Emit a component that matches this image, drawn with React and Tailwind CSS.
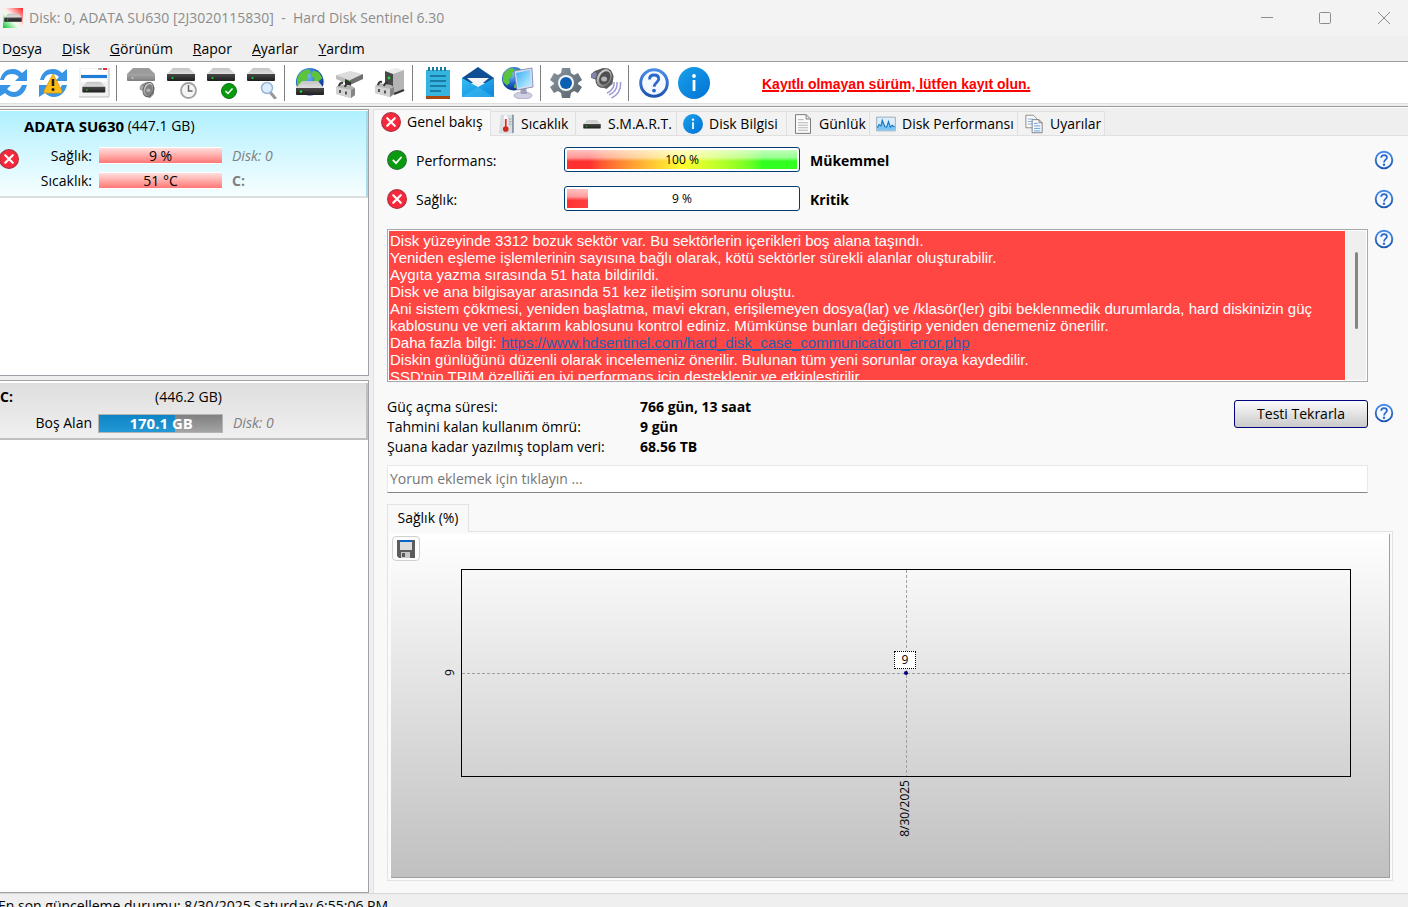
import { useState } from "react";

// shared gradients, referenced by id from every icon
function Gradients() {
  return (
    <svg width="0" height="0" className="absolute" aria-hidden="true">
      <defs>
        <linearGradient id="driveTop" x1="0" y1="0" x2="0" y2="1">
          <stop offset="0" stopColor="#c4c4c4" />
          <stop offset="1" stopColor="#dedede" />
        </linearGradient>
        <linearGradient id="driveFront" x1="0" y1="0" x2="0" y2="1">
          <stop offset="0" stopColor="#4a4a4a" />
          <stop offset="1" stopColor="#1e1e1e" />
        </linearGradient>
        <linearGradient id="driveOff" x1="0" y1="0" x2="0" y2="1">
          <stop offset="0" stopColor="#a8a8a8" />
          <stop offset="1" stopColor="#7d7d7d" />
        </linearGradient>
        <linearGradient id="metal" x1="0" y1="0" x2="1" y2="1">
          <stop offset="0" stopColor="#e8e8e8" />
          <stop offset="1" stopColor="#6a6a6a" />
        </linearGradient>
        <linearGradient id="infoBlue" x1="0" y1="0" x2="1" y2="1">
          <stop offset="0" stopColor="#1ba1e8" />
          <stop offset="1" stopColor="#0072d6" />
        </linearGradient>
        <linearGradient id="helpRing" x1="0" y1="0" x2="0" y2="1">
          <stop offset="0" stopColor="#4a8be8" />
          <stop offset="1" stopColor="#1f57b0" />
        </linearGradient>
        <linearGradient id="envelope" x1="0" y1="0" x2="1" y2="1">
          <stop offset="0" stopColor="#35bff2" />
          <stop offset="1" stopColor="#0a84dc" />
        </linearGradient>
        <linearGradient id="gearGray" x1="0" y1="0" x2="1" y2="1">
          <stop offset="0" stopColor="#8b98a2" />
          <stop offset="1" stopColor="#56616b" />
        </linearGradient>
        <linearGradient id="appBg" x1="1" y1="0" x2="0" y2="1">
          <stop offset="0" stopColor="#ff2020" />
          <stop offset="0.45" stopColor="#ffe8e8" />
          <stop offset="0.6" stopColor="#e8ffe8" />
          <stop offset="1" stopColor="#10c030" />
        </linearGradient>
        <linearGradient id="screen" x1="0" y1="0" x2="1" y2="1">
          <stop offset="0" stopColor="#3aaef8" />
          <stop offset="1" stopColor="#c8f4ff" />
        </linearGradient>
        <radialGradient id="ocean" cx="0.4" cy="0.3" r="0.7">
          <stop offset="0" stopColor="#7cc4ff" />
          <stop offset="0.6" stopColor="#1d5fc8" />
          <stop offset="1" stopColor="#0b2f80" />
        </radialGradient>
      </defs>
    </svg>
  );
}

function Icon({ size = 32, className = "", children }) {
  return (
    <svg width={size} height={size} viewBox="0 0 32 32" className={`shrink-0 ${className}`} fill="none" aria-hidden="true">
      {children}
    </svg>
  );
}

function Drive({ transform, off }) {
  return (
    <g transform={transform}>
      <path d="M7 1h16l6 6H1z" fill={off ? "#9b9b9b" : "url(#driveTop)"} />
      <path d="M1 7h28v6q0 1-1 1H2q-1 0-1-1z" fill={off ? "url(#driveOff)" : "url(#driveFront)"} />
      <circle cx="6.5" cy="11" r="1" fill={off ? "#c8c8c8" : "#19e02c"} />
    </g>
  );
}

function Globe({ transform }) {
  return (
    <g transform={transform}>
      <circle cx="12" cy="12" r="12" fill="url(#ocean)" />
      <path d="M3 5q4-4 8-4l2 3-3 2 1 3-4 3 1 4-3 3-4-4q-1-6 2-10zM15 2l5 2 3 5-3 2-2 5-3-2 1-5-3-2zM13 17l4 1-2 4-3-1z" fill="#5cc43c" />
    </g>
  );
}

function Arrows() {
  return (
    <g fill="#3894e4">
      <path d="M2 13C4 5 9 2 15 2c4 0 7 2 9 4l5-4v12H17l4-4c-2-2-4-3-7-3-4 0-7 2-8 6z" />
      <path d="M29 18c-2 8-7 12-13 12-4 0-7-2-9-4l-6 4V18h12l-4 4c2 2 4 3 7 3 4 0 6-3 8-7z" />
    </g>
  );
}

function HelpIcon({ size = 20 }) {
  return (
    <Icon size={size}>
      <circle cx="16" cy="16" r="13.3" stroke="url(#helpRing)" strokeWidth="3" fill="#f4f9ff" />
      <path d="M11.5 12.5q0-4.5 4.6-4.5t4.6 4c0 3.4-4.6 3.6-4.6 7.8" stroke="#2b68c8" strokeWidth="2.8" />
      <circle cx="16" cy="23.6" r="1.9" fill="#2b68c8" />
    </Icon>
  );
}

function InfoIcon({ size = 20 }) {
  return (
    <Icon size={size}>
      <circle cx="16" cy="16" r="16" fill="url(#infoBlue)" />
      <path d="M16 13v11" stroke="#fff" strokeWidth="2.8" />
      <circle cx="16" cy="9" r="1.9" fill="#fff" />
    </Icon>
  );
}

function ErrorIcon({ className }) {
  return (
    <Icon size={20} className={className}>
      <circle cx="16" cy="16" r="15" fill="#f8283c" stroke="#b03040" strokeWidth="2" />
      <path d="M10 10l12 12M22 10L10 22" stroke="#fff" strokeWidth="3.4" strokeLinecap="round" />
    </Icon>
  );
}

function OkIcon() {
  return (
    <Icon size={20}>
      <circle cx="16" cy="16" r="15" fill="#0a9a10" stroke="#2a7430" strokeWidth="2" />
      <path d="M10 16.500l4.500 4.500 8-9" stroke="#fff" strokeWidth="2.8" strokeLinecap="round" />
    </Icon>
  );
}

function Speaker({ transform, gray }) {
  return (
    <g transform={transform}>
      <path d="M1 7l3-3 7-3 6 2 3 6-1 8-5 5-6-3-2-6-5-2z" fill={gray ? "#8a8a8a" : "#5c5c64"} />
      <path d="M1 7l4-2 2 7-5-1z" fill={gray ? "#a8a8a8" : "#8484b0"} />
      <ellipse cx="12" cy="11" rx="6.500" ry="9.500" transform="rotate(20 12 11)" fill="url(#metal)" stroke="#555" />
      <ellipse cx="12.500" cy="11" rx="4.500" ry="7" transform="rotate(20 12.500 11)" fill={gray ? "#808080" : "#505054"} />
      <circle cx="12" cy="12" r="2.500" fill="#b4b4b4" />
    </g>
  );
}

function Connector({ transform }) {
  return (
    <g transform={transform}>
      <path d="M0 5l4-3 12 2 3 2v7l-4 3L0 12z" fill="#b4b4b4" />
      <path d="M0 5l15 3v8L0 12z" fill="#d2d2d2" />
      <path d="M15 8l4-2v7l-4 3z" fill="#858585" />
      <path d="M3 4q1-4 4-3M9 5q1-4 4-3" stroke="#333" strokeWidth="2" />
      <path d="M4 8v3M10 9.500v3" stroke="#555" strokeWidth="2" />
    </g>
  );
}

const toolbar = [
  [
    { label: "Yenile", icon: <Icon><Arrows /></Icon> },
    {
      label: "Zorla yenile",
      icon: (
        <Icon>
          <Arrows />
          <path d="M15 7l9 17q.500 2-1.500 2h-15q-2 0-1.500-2z" fill="#fdbb16" stroke="#e09a08" strokeWidth="0.8" />
          <path d="M15 12v7" stroke="#222" strokeWidth="2.6" />
          <circle cx="15" cy="22.500" r="1.500" fill="#222" />
        </Icon>
      ),
    },
    {
      label: "Pencere",
      icon: (
        <Icon>
          <path d="M1 1h30v29H1z" fill="#f1f1f1" />
          <path d="M1 30h30v-29" stroke="#bdbdbd" />
          <path d="M3 2h26v5H3z" fill="#fff" />
          <path d="M20 2h4" stroke="#aaa" strokeWidth="2" />
          <path d="M25 2h4" stroke="#e03038" strokeWidth="2" />
          <path d="M3 8h26v3H3z" fill="#1c7ed8" />
          <path d="M3 12h26v3H3z" fill="#fff" />
          <Drive transform="translate(3.500 14) scale(.82)" />
        </Icon>
      ),
    },
  ],
  [
    { label: "Ses", icon: <Icon><Drive off /><Speaker gray transform="translate(13 14) scale(.78)" /></Icon> },
    {
      label: "Zamanla",
      icon: (
        <Icon>
          <Drive />
          <circle cx="22.500" cy="23.500" r="7.500" fill="#f4f4f4" stroke="#a2a2a2" strokeWidth="1.800" />
          <path d="M22.500 18v6h4" stroke="#666" strokeWidth="1.500" />
        </Icon>
      ),
    },
    {
      label: "Test",
      icon: (
        <Icon>
          <Drive />
          <circle cx="23" cy="24" r="7.500" fill="#0a9a10" stroke="#0a7a14" />
          <path d="M19.500 24l2.500 2.500 4.500-5" stroke="#fff" strokeWidth="1.500" />
        </Icon>
      ),
    },
    {
      label: "Ara",
      icon: (
        <Icon>
          <Drive />
          <path d="M24 25l5 6" stroke="#999" strokeWidth="3" strokeLinecap="round" />
          <circle cx="21" cy="21" r="5.500" fill="#dceeff" stroke="#9cb4d4" strokeWidth="1.500" />
        </Icon>
      ),
    },
  ],
  [
    {
      label: "Web",
      icon: (
        <Icon>
          <Globe transform="translate(2 1) scale(1.15)" />
          <path d="M8 14h16l6 7H2z" fill="url(#driveTop)" />
          <path d="M2 21h28v6q0 1-1 1H3q-1 0-1-1z" fill="url(#driveFront)" />
          <circle cx="7" cy="24.500" r="1.200" fill="#19e02c" />
        </Icon>
      ),
    },
    {
      label: "Güç",
      icon: (
        <Icon>
          <path d="M2 8l14-4 13 3-13 6z" fill="#dcdcdc" />
          <path d="M2 8l14 5v5L2 12z" fill="#bcbcbc" />
          <path d="M16 13l13-6v5l-13 6z" fill="#6e6e6e" />
          <circle cx="14" cy="14" r="1.200" fill="#19d02c" />
          <path d="M11 12l6 3v4l-6-2z" fill="#333" />
          <Connector transform="translate(2 15)" />
        </Icon>
      ),
    },
    {
      label: "Bağlantı",
      icon: (
        <Icon>
          <path d="M11 4l11-3 8 2-11 4z" fill="#ececec" />
          <path d="M19 7l11-4v19l-11 5z" fill="#b4b4b4" />
          <path d="M11 4l8 3v20l-8-4z" fill="#484848" />
          <circle cx="15" cy="11" r="1.400" fill="#19e02c" />
          <path d="M20 27l10-4" stroke="#333" strokeWidth="2" />
          <Connector transform="translate(1 14)" />
        </Icon>
      ),
    },
  ],
  [
    {
      label: "Günlük",
      icon: (
        <Icon>
          <path d="M4 3h24v26H4z" fill="#35b4e0" />
          <path d="M4 29h24v3H4z" fill="#a8480c" />
          <path d="M7 0v4M11 0v4M15 0v4M19 0v4M23 0v4" stroke="#1878a0" strokeWidth="2" />
          <path d="M8 9h16M8 14h16M8 19h16M8 24h11" stroke="#126890" strokeWidth="1.500" />
        </Icon>
      ),
    },
    {
      label: "E-posta",
      icon: (
        <Icon>
          <path d="M0 11L16 0l16 11v5H0z" fill="#0d4e94" />
          <path d="M5 11h22L16 20z" fill="#f4f4f6" />
          <path d="M0 11l16 9 16-9v19H0z" fill="url(#envelope)" />
          <path d="M0 30l16-10 16 10z" fill="#4cc8f8" opacity=".4" />
        </Icon>
      ),
    },
    {
      label: "Ağ",
      icon: (
        <Icon>
          <Globe transform="scale(.98)" />
          <ellipse cx="21" cy="28.500" rx="9" ry="3.500" fill="#d0d0e2" stroke="#8888aa" strokeWidth="0.600" />
          <path d="M18 20l6-1 1 8h-6z" fill="#a0a0bc" />
          <path d="M12 4l18-3 1 19-16 3z" fill="#d8dcf0" stroke="#7880a8" strokeWidth="0.800" />
          <path d="M14 6l14-3 1 15-13 3z" fill="url(#screen)" />
        </Icon>
      ),
    },
  ],
  [
    {
      label: "Seçenekler",
      icon: (
        <Icon>
          <path
            d="M12 1h8l1 5 3 2 4-2 4 7-4 3v1l4 3-4 6-4-2-3 2-1 5h-8l-1-5-3-2-4 2-4-6 4-3v-1l-4-3 4-7 4 2 3-2z"
            fill="url(#gearGray)"
          />
          <circle cx="16" cy="16" r="8" fill="#f4f6f8" />
          <circle cx="16" cy="16" r="6" fill="#0c60b4" />
        </Icon>
      ),
    },
    {
      label: "Sesli uyarı",
      icon: (
        <Icon>
          <path d="M24 15q1 7-7 11M27 15q1 9-8 13M30.500 15q1 11-9 16" stroke="#9c9cd4" strokeWidth="1.500" />
          <Speaker transform="scale(1.18 1)" />
        </Icon>
      ),
    },
  ],
  [
    { label: "Yardım", icon: <HelpIcon size={32} /> },
    { label: "Hakkında", icon: <InfoIcon size={32} /> },
  ],
];

const menu = [
  ["D", "o", "sya"],
  ["", "D", "isk"],
  ["", "G", "örünüm"],
  ["", "R", "apor"],
  ["", "A", "yarlar"],
  ["", "Y", "ardım"],
];

const tabs = [
  { name: "Genel bakış", width: "w-[117px]", icon: <ErrorIcon className="ml-px" /> },
  {
    name: "Sıcaklık",
    width: "w-[85px]",
    icon: (
      <Icon size={20} className="-mr-0.5">
        <path d="M6 1h20v30H3z" fill="#d8dde4" />
        <path d="M24 1h3v28l-3 2z" fill="#8d98a8" />
        <path d="M14 5v18" stroke="#fff" strokeWidth="6" strokeLinecap="round" />
        <path d="M14 8v15" stroke="#d83020" strokeWidth="3" />
        <circle cx="14" cy="24" r="4.500" fill="#d02818" />
        <path d="M19 8h4M19 12h4M19 16h4" stroke="#888" />
      </Icon>
    ),
  },
  {
    name: "S.M.A.R.T.",
    width: "w-[101px]",
    icon: <Icon size={20}><Drive transform="translate(1 9)" /></Icon>,
  },
  { name: "Disk Bilgisi", width: "w-[110px]", icon: <InfoIcon /> },
  {
    name: "Günlük",
    width: "w-[83px]",
    icon: (
      <Icon size={20}>
        <path d="M4 1h17l7 7v23H4z" fill="#fafafa" stroke="#7c7c7c" strokeWidth="1.600" />
        <path d="M21 1v7h7" stroke="#7c7c7c" strokeWidth="1.600" />
        <path d="M8 9h9M8 14h16M8 18h16M8 22h16M8 26h16" stroke="#b0b0b0" strokeWidth="1.500" />
      </Icon>
    ),
  },
  {
    name: "Disk Performansı",
    width: "w-[148px]",
    icon: (
      <Icon size={20}>
        <path d="M1 5h30v22H1z" fill="#dcecf8" stroke="#9ab0c0" strokeWidth="1.600" />
        <path d="M2 22l3-5 3 2 2-9 4 10 3 1 3-9 3 9 3-3 4 3v5H2z" fill="#7cc4f4" />
        <path d="M2 22l3-5 3 2 2-9 4 10 3 1 3-9 3 9 3-3 4 3" stroke="#1878c0" strokeWidth="1.800" />
      </Icon>
    ),
  },
  {
    name: "Uyarılar",
    width: "w-[87px]",
    icon: (
      <Icon size={20}>
        <path d="M3 2h12l5 5v15H3z" fill="#fafafa" stroke="#8a8a8a" strokeWidth="1.500" />
        <path d="M6 8h8M6 12h8M6 16h8" stroke="#7aaee8" strokeWidth="1.500" />
        <path d="M13 9h11l5 5v16H13z" fill="#fafafa" stroke="#7c7c7c" strokeWidth="1.500" />
        <path d="M24 9v5h5" stroke="#7c7c7c" strokeWidth="1.500" />
        <path d="M16 15h6M16 19h10M16 23h10M16 27h10" stroke="#5a9ae4" strokeWidth="1.500" />
      </Icon>
    ),
  },
];

const stats = [
  { label: "Güç açma süresi:", value: "766 gün, 13 saat" },
  { label: "Tahmini kalan kullanım ömrü:", value: "9 gün" },
  { label: "Şuana kadar yazılmış toplam veri:", value: "68.56 TB" },
];

function TitleBar() {
  return (
    <header className="flex h-9 shrink-0 items-center bg-[#f3f3f3] text-[#8c8c8c]">
      <Icon size={20} className="ml-[3px]">
        <path d="M0 0h32v32H0z" fill="url(#appBg)" />
        <Drive transform="translate(1 8)" />
      </Icon>
      <h1 className="ml-1.5 grow whitespace-pre">Disk: 0, ADATA SU630 [2J3020115830]  -  Hard Disk Sentinel 6.30</h1>
      <div className="flex">
        <button type="button" aria-label="Simge durumuna küçült" className="grid h-8 w-[58px] place-items-center">
          <svg width="12" height="12" stroke="#8c8c8c" fill="none"><path d="M0 5.500h12" /></svg>
        </button>
        <button type="button" aria-label="Ekranı kapla" className="grid h-8 w-[58px] place-items-center">
          <svg width="12" height="12" stroke="#8c8c8c" fill="none"><rect x=".5" y=".5" width="11" height="11" rx="1" /></svg>
        </button>
        <button type="button" aria-label="Kapat" className="ml-1.5 grid h-8 w-12 place-items-center">
          <svg width="12" height="12" stroke="#8c8c8c" fill="none"><path d="M0 0l12 12M12 0L0 12" /></svg>
        </button>
      </div>
    </header>
  );
}

function Toolbar() {
  return (
    <div className="flex h-[43px] shrink-0 items-center border-t border-b border-t-[#a0a0a0] border-b-[#e0e0e0] bg-white">
      <div className="-ml-1.5 flex items-center">
        {toolbar.map((group, i) => (
          <div key={i} className="flex items-center">
            {i > 0 && <span className="mr-[5px] ml-0.5 h-9 w-px bg-[#808080]" />}
            {group.map((item) => (
              <button key={item.label} type="button" aria-label={item.label} className="grid h-10 w-10 place-items-center">
                {item.icon}
              </button>
            ))}
          </div>
        ))}
      </div>
      <a href="#register" className="ml-12 pt-0.5 font-['Liberation_Sans',sans-serif] font-bold text-[#f00] underline decoration-2">
        Kayıtlı olmayan sürüm, lütfen kayıt olun.
      </a>
    </div>
  );
}

function SideRow({ label, value, note, noteClass }) {
  return (
    <div className="flex h-[25px] items-center">
      <span className="w-[92px] text-right">{label}</span>
      <span className="ml-[7px] h-[17px] w-[123px] border-t border-b border-white bg-linear-to-b from-[#ffdede] to-[#ff7676] text-center leading-[15px]">
        {value}
      </span>
      <span className={`ml-2.5 text-[#808080] ${noteClass}`}>{note}</span>
    </div>
  );
}

function Sidebar() {
  return (
    <aside className="flex w-[369px] shrink-0 flex-col gap-1">
      <section className="h-[267px] shrink-0 border-t border-r border-b border-[#a0a0a8] bg-white pt-px">
        <div className="h-[87px] border-r-2 border-b-2 border-r-[#a8dce8] border-b-[#dcdfe0] bg-linear-to-b from-[#b0f0ff] to-[#f6feff]">
          <p className="flex h-8 items-center pb-0.5 pl-6 text-[15px] whitespace-pre"><b>ADATA SU630</b><span className="text-[14px]"> (447.1 GB)</span></p>
          <div className="relative">
            <ErrorIcon className="absolute top-1.5 -left-px" />
            <SideRow label="Sağlık:" value="9 %" note="Disk: 0" noteClass="italic" />
            <SideRow label="Sıcaklık:" value="51 °C" note="C:" noteClass="font-bold" />
          </div>
        </div>
      </section>
      <section className="grow border-t border-r border-b border-[#a0a0a8] bg-white pt-0.5">
        <div className="h-[57px] border-r-2 border-b-2 border-[#c0c0c0] bg-linear-to-b from-[#dedede] to-[#f0f0f0]">
          <p className="flex h-[27px] items-center">
            <b className="w-[155px]">C:</b>(446.2 GB)
          </p>
          <div className="flex h-[26px] items-center">
            <span className="w-[92px] text-right">Boş Alan</span>
            <span className="ml-1.5 h-[19px] w-[125px] border border-[#b4b4b4] bg-linear-to-b from-[#808080] to-[#a4a4a4]">
              <span className="flex h-full w-[62%] justify-center bg-linear-to-b from-[#0c84c4] to-[#2298d4]">
                <b className="pl-12 text-[15px] leading-[17px] whitespace-nowrap text-white">170.1 GB</b>
              </span>
            </span>
            <i className="ml-2.5 text-[#808080]">Disk: 0</i>
          </div>
        </div>
      </section>
    </aside>
  );
}

function Meter({ icon, label, value, text, fill }) {
  return (
    <div className="flex h-[39px] items-center">
      {icon}
      <span className="ml-[9px] w-[148px] pt-0.5">{label}</span>
      <div
        role="progressbar"
        aria-label={label}
        aria-valuenow={value}
        className="relative h-[25px] w-[236px] rounded-[3px] border border-[#003c74] bg-white p-0.5"
      >
        <div className={`h-full bg-linear-to-r ${fill}`} style={{ width: `${value}%` }}>
          <div className="h-full bg-linear-to-b from-white/70 via-white/50 via-40% to-transparent to-60%" />
        </div>
        <span className="absolute inset-0 text-center text-xs leading-[23px]">{value} %</span>
      </div>
      <b className="ml-2.5 grow pt-0.5">{text}</b>
      <button type="button" aria-label="Yardım"><HelpIcon /></button>
    </div>
  );
}

function Message() {
  return (
    <div className="flex h-[153px] grow border border-[#a8a8a8] bg-white p-px">
      <div className="grow overflow-hidden bg-[#ff4643] pt-px pl-px font-['Liberation_Sans',sans-serif] text-[15px] leading-[17px] text-white">
        <p>Disk yüzeyinde 3312 bozuk sektör var. Bu sektörlerin içerikleri boş alana taşındı.</p>
        <p>Yeniden eşleme işlemlerinin sayısına bağlı olarak, kötü sektörler sürekli alanlar oluşturabilir.</p>
        <p>Aygıta yazma sırasında 51 hata bildirildi.</p>
        <p>Disk ve ana bilgisayar arasında 51 kez iletişim sorunu oluştu.</p>
        <p>
          Ani sistem çökmesi, yeniden başlatma, mavi ekran, erişilemeyen dosya(lar) ve /klasör(ler) gibi beklenmedik
          durumlarda, hard diskinizin güç kablosunu ve veri aktarım kablosunu kontrol ediniz. Mümkünse bunları
          değiştirip yeniden denemeniz önerilir.
        </p>
        <p>
          Daha fazla bilgi:{" "}
          <a href="#communication-error" className="text-[#2860b0] underline">
            https://www.hdsentinel.com/hard_disk_case_communication_error.php
          </a>
        </p>
        <p>Diskin günlüğünü düzenli olarak incelemeniz önerilir. Bulunan tüm yeni sorunlar oraya kaydedilir.</p>
        <p>SSD'nin TRIM özelliği en iyi performans için desteklenir ve etkinleştirilir.</p>
      </div>
      <div className="ml-px w-5 shrink-0 bg-[#efefef] pt-[21px]">
        <div className="mx-auto h-[77px] w-[3px] rounded-full bg-[#858585]" />
      </div>
    </div>
  );
}

function HealthChart() {
  return (
    <section className="flex grow flex-col">
      <h2 className="relative z-10 -mb-px flex h-7 w-[82px] items-center justify-center border border-b-0 border-[#e3e3e3] bg-[#f9f9f9] pb-0.5">
        Sağlık (%)
      </h2>
      <div className="flex grow border border-[#e3e3e3] bg-[#fafafa] p-0.5 pl-[3px]">
        <div className="relative flex grow border-r border-b border-[#a0a0a0] bg-linear-to-b from-white to-[#c0c0c0] pt-[35px] pr-[38px] pb-[100px] pl-[70px]">
          <button
            type="button"
            aria-label="Kaydet"
            className="absolute top-0.5 left-px grid h-[25px] w-7 place-items-center rounded-[4px] border border-[#d0d0d0] bg-[#fdfdfd]"
          >
            <svg width="18" height="18" fill="none" aria-hidden="true">
              <path d="M0 0h18v18H2l-2-2z" fill="#5c5c5c" />
              <path d="M3 0h12v2H3z" fill="#0a64c8" />
              <path d="M3 2h12v8H3z" fill="#dcdcdc" />
              <path d="M4 12h9v6H4z" fill="#c8c8c8" />
              <path d="M5 13h3v4H5z" fill="#5c5c5c" />
            </svg>
          </button>
          <div className="relative grow border border-black text-xs">
            <svg className="block h-full w-full" aria-hidden="true">
              <g stroke="#a0a0a0" strokeDasharray="3 2" shapeRendering="crispEdges">
                <line x1="50%" y1="0" x2="50%" y2="100%" />
                <line x1="0" y1="50%" x2="100%" y2="50%" />
              </g>
              <circle cx="50%" cy="50%" r="2" fill="#000080" />
            </svg>
            <span className="absolute bottom-1/2 left-1/2 mb-1 -ml-3 h-[18px] w-[22px] border border-dotted border-black bg-white text-center leading-4">
              9
            </span>
            <span className="absolute top-1/2 -left-5 -mt-1 rotate-180 leading-4 [writing-mode:vertical-rl]">9</span>
            <span className="absolute top-full left-1/2 mt-1 -ml-[9px] rotate-180 leading-4 [writing-mode:vertical-rl]">8/30/2025</span>
          </div>
        </div>
      </div>
    </section>
  );
}

export default function App() {
  const [activeTab, setActiveTab] = useState(0);
  const [comment, setComment] = useState("");

  return (
    <div className="flex h-screen flex-col overflow-hidden bg-[#efefef] font-['Open_Sans','Noto_Sans',sans-serif] text-[14px] leading-5 text-black">
      <Gradients />
      <TitleBar />
      <nav className="flex h-[25px] shrink-0 items-center gap-5 pl-0.5">
        {menu.map(([before, key, after]) => (
          <button key={key + after} type="button">
            {before}<span className="underline">{key}</span>{after}
          </button>
        ))}
      </nav>
      <Toolbar />
      <div className="mt-0.5 mb-px h-0.5 shrink-0 border-t border-[#999] bg-white" />

      <div className="flex min-h-0 grow gap-1">
        <Sidebar />
        <main className="flex min-w-0 grow flex-col border-l border-[#e0e0e0]">
          {/* sekmeler */}
          <div role="tablist" className="flex h-[27px] shrink-0 items-end">
            {tabs.map((tab, i) => (
              <button
                key={tab.name}
                type="button"
                role="tab"
                aria-selected={i === activeTab}
                onClick={() => setActiveTab(i)}
                className={`flex shrink-0 items-center gap-1.5 border-r border-[#e0e0e0] pl-1.5 whitespace-nowrap ${tab.width} ${
                  i === activeTab ? "h-[27px] border-t bg-[#f9f9f9] pb-0.5" : "h-[25px] border-t border-b bg-[#f2f2f2]"
                }`}
              >
                {tab.icon}
                {tab.name}
              </button>
            ))}
            <span className="grow border-b border-[#e0e0e0]" />
          </div>

          <div className="flex grow flex-col bg-[#f9f9f9] pt-1 pr-[15px] pb-3 pl-[13px]">
            <div className="-mr-px">
              <Meter
                icon={<OkIcon />}
                label="Performans:"
                value={100}
                text="Mükemmel"
                fill="from-[#ff3030] from-10% via-[#ffff30] to-[#30ff20] to-85%"
              />
              <Meter icon={<ErrorIcon />} label="Sağlık:" value={9} text="Kritik" fill="from-[#ff3030] to-[#ff4040]" />
            </div>
            <div className="mt-[11px] -mr-px flex items-start gap-1.5">
              <Message />
              <button type="button" aria-label="Yardım"><HelpIcon /></button>
            </div>
            <div className="mt-[15px] -mr-px flex items-start">
              <dl className="grid grow grid-cols-[253px_1fr]">
                {stats.map((row) => (
                  <div key={row.label} className="contents">
                    <dt>{row.label}</dt>
                    <dd className="font-bold">{row.value}</dd>
                  </div>
                ))}
              </dl>
              <button
                type="button"
                className="mt-[3px] mr-1.5 h-7 w-[134px] rounded-[3px] border border-[#000080] bg-linear-to-b from-[#fcfcfc] to-[#cacaca]"
              >
                Testi Tekrarla
              </button>
              <button type="button" aria-label="Yardım" className="mt-1.5"><HelpIcon /></button>
            </div>
            <input
              type="text"
              aria-label="Yorum"
              placeholder="Yorum eklemek için tıklayın ..."
              value={comment}
              onChange={(e) => setComment(e.target.value)}
              className="mt-2 mr-[25px] h-7 border border-[#e8e8e8] border-b-[#868686] bg-white px-0.5 pb-0.5 placeholder:text-[#757575]"
            />
            <div className="mt-[11px] flex grow">
              <HealthChart />
            </div>
          </div>
        </main>
      </div>

      {/* durum çubuğu */}
      <footer className="h-[14px] shrink-0 border-t border-[#d8d8d8] pt-0.5 whitespace-nowrap">
        <p className="-ml-0.5">En son güncelleme durumu: 8/30/2025 Saturday 6:55:06 PM</p>
      </footer>
    </div>
  );
}
